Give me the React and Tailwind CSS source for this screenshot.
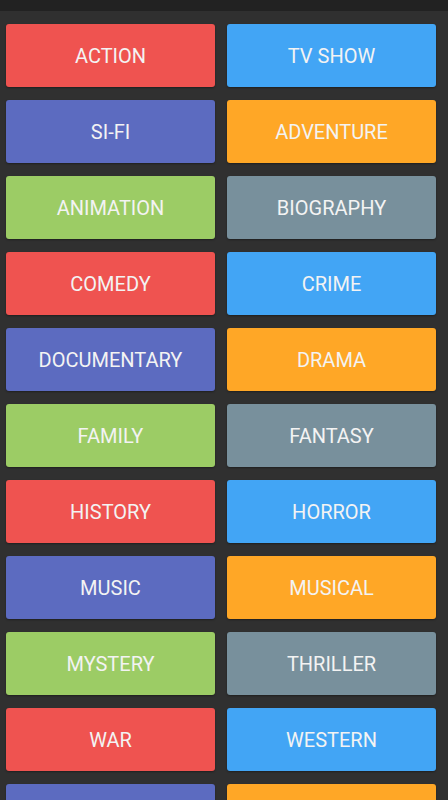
import React from 'react';

const genres = [
  ['ACTION', 'bg-[#ef5350]'],
  ['TV SHOW', 'bg-[#42a5f5]'],
  ['SI-FI', 'bg-[#5c6bc0]'],
  ['ADVENTURE', 'bg-[#ffa726]'],
  ['ANIMATION', 'bg-[#9ccc65]'],
  ['BIOGRAPHY', 'bg-[#78909c]'],
  ['COMEDY', 'bg-[#ef5350]'],
  ['CRIME', 'bg-[#42a5f5]'],
  ['DOCUMENTARY', 'bg-[#5c6bc0]'],
  ['DRAMA', 'bg-[#ffa726]'],
  ['FAMILY', 'bg-[#9ccc65]'],
  ['FANTASY', 'bg-[#78909c]'],
  ['HISTORY', 'bg-[#ef5350]'],
  ['HORROR', 'bg-[#42a5f5]'],
  ['MUSIC', 'bg-[#5c6bc0]'],
  ['MUSICAL', 'bg-[#ffa726]'],
  ['MYSTERY', 'bg-[#9ccc65]'],
  ['THRILLER', 'bg-[#78909c]'],
  ['WAR', 'bg-[#ef5350]'],
  ['WESTERN', 'bg-[#42a5f5]'],
  // last row is cut off by the bottom edge, labels not visible
  ['', 'bg-[#5c6bc0]'],
  ['', 'bg-[#ffa726]'],
];

export default function App() {
  return (
    <div className="w-[448px] h-[800px] overflow-hidden bg-[#303030] font-['Roboto',sans-serif]">
      <div className="h-[11px] bg-[#222222]" />
      <div className="grid grid-cols-2 gap-x-[12px] gap-y-[13px] pl-[6px] pr-[12px] pt-[13px]">
        {genres.map(([name, color], i) => (
          <button
            key={i}
            className={`${color} h-[63px] rounded-[3px] flex items-center justify-center pt-[1px] text-[20px] text-[#f3f3f3] shadow-[0_1px_2px_rgba(0,0,0,0.35)]`}
          >
            {name}
          </button>
        ))}
      </div>
    </div>
  );
}
